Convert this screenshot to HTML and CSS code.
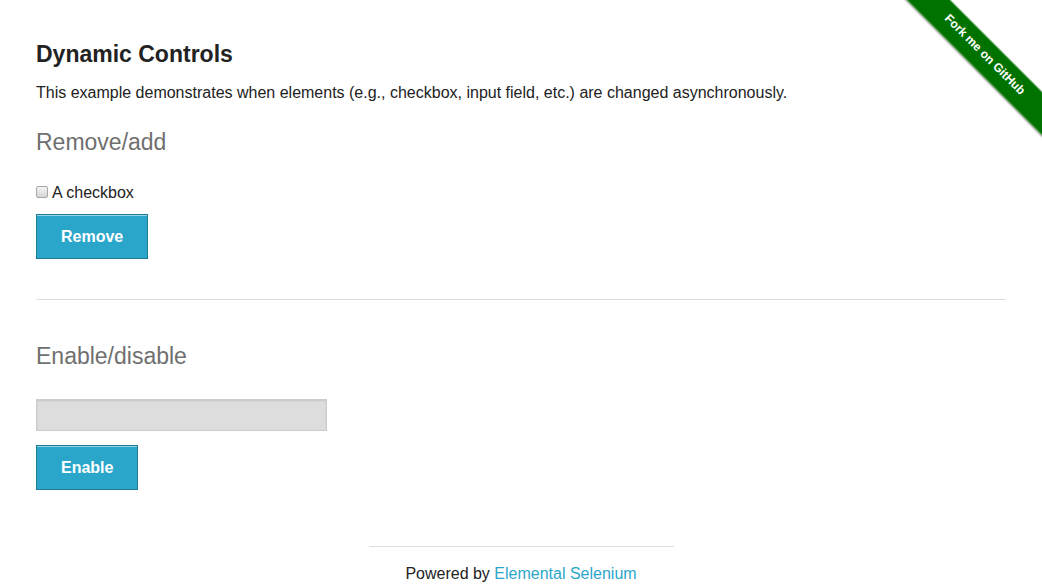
FILE: index.html
```html
<!DOCTYPE html>
<html lang="en">
<head>
<meta charset="utf-8">
<title>The Internet</title>
<link rel="stylesheet" href="styles.css">
</head>
<body>
<div class="ribbon-wrap"><a class="ribbon" href="#">Fork me on GitHub</a></div>
<div class="page">
  <h3 class="title">Dynamic Controls</h3>
  <p class="lead">This example demonstrates when elements (e.g., checkbox, input field, etc.) are changed asynchronously.</p>

  <h4 class="subtitle first">Remove/add</h4>
  <div class="check-row"><input type="checkbox" class="check"><span>A checkbox</span></div>
  <button class="btn btn-remove" type="button">Remove</button>

  <hr class="divider">

  <h4 class="subtitle second">Enable/disable</h4>
  <input type="text" class="text-input" disabled>
  <button class="btn btn-enable" type="button">Enable</button>

  <div class="footer">
    <hr class="footer-rule">
    <div class="footer-text">Powered by <a href="#">Elemental Selenium</a></div>
  </div>
</div>
</body>
</html>
```

FILE: styles.css
```css
html, body {
  margin: 0;
  padding: 0;
  background: #fff;
}
body {
  font-family: "Liberation Sans", Arial, Helvetica, sans-serif;
  font-size: 16px;
  color: #222;
  overflow: hidden;
}
.page {
  padding: 40px 36px 0 36px;
  display: flex;
  flex-direction: column;
  align-items: flex-start;
}
.title {
  margin: 0;
  font-size: 23px;
  line-height: 28px;
  font-weight: bold;
  color: #222;
}
.lead {
  margin: 15px 0 0 0;
  font-size: 16px;
  line-height: 20px;
}
.subtitle {
  margin: 0;
  font-size: 23px;
  line-height: 28px;
  font-weight: normal;
  color: #6f6f6f;
}
.subtitle.first { margin-top: 25px; }
.subtitle.second { margin-top: 42px; }
.check-row {
  margin-top: 27px;
  display: flex;
  align-items: center;
  line-height: 20px;
  height: 20px;
}
.check {
  -webkit-appearance: none;
  appearance: none;
  width: 12px;
  height: 12px;
  margin: 0 4px 0 0;
  border: 1px solid #a6a6a6;
  border-radius: 2px;
  background: linear-gradient(#f4f4f4, #d6d6d6);
  position: relative;
  top: -1px;
}
.btn {
  margin-top: 11px;
  font-family: inherit;
  font-size: 16px;
  font-weight: bold;
  line-height: 17px;
  color: #fff;
  background: #2ba6cb;
  border: 1px solid #1e7c99;
  box-shadow: inset 0 1px 0 rgba(255,255,255,0.5);
  padding: 13px 24px 13px 24px;
  cursor: pointer;
  border-radius: 0;
}
.btn-enable { margin-top: 14px; }
.divider {
  align-self: stretch;
  margin: 40px 0 0 0;
  border: 0;
  border-top: 1px solid #ddd;
  height: 0;
}
.text-input {
  margin-top: 29px;
  width: 291px;
  height: 32px;
  box-sizing: border-box;
  background: #ddd;
  border: 1px solid #ccc;
  box-shadow: inset 0 1px 2px rgba(0,0,0,0.1);
  padding: 0 8px;
  font-family: inherit;
  font-size: 14px;
}
.footer {
  align-self: stretch;
  display: flex;
  flex-direction: column;
  align-items: center;
  margin-top: 56px;
}
.footer-rule {
  width: 305px;
  margin: 0;
  border: 0;
  border-top: 1px solid #ddd;
  height: 0;
}
.footer-text {
  margin-top: 17px;
  line-height: 20px;
}
.footer-text a {
  color: #2ba6cb;
  text-decoration: none;
}
.ribbon-wrap {
  position: absolute;
  top: 0;
  right: 0;
  width: 140px;
  height: 140px;
  overflow: hidden;
}
.ribbon {
  position: absolute;
  left: -18px;
  top: 40px;
  width: 200px;
  height: 31px;
  box-sizing: border-box;
  line-height: 27px;
  transform: rotate(45deg);
  background: #007200;
  color: #fff;
  text-align: center;
  text-decoration: none;
  font-family: "Liberation Sans", Arial, sans-serif;
  font-weight: bold;
  font-size: 12px;
  border-top: 1px solid rgba(255,255,255,0.35);
  border-bottom: 1px solid rgba(255,255,255,0.35);
  box-shadow: 0 1px 2px rgba(0,0,0,0.4);
}
```
